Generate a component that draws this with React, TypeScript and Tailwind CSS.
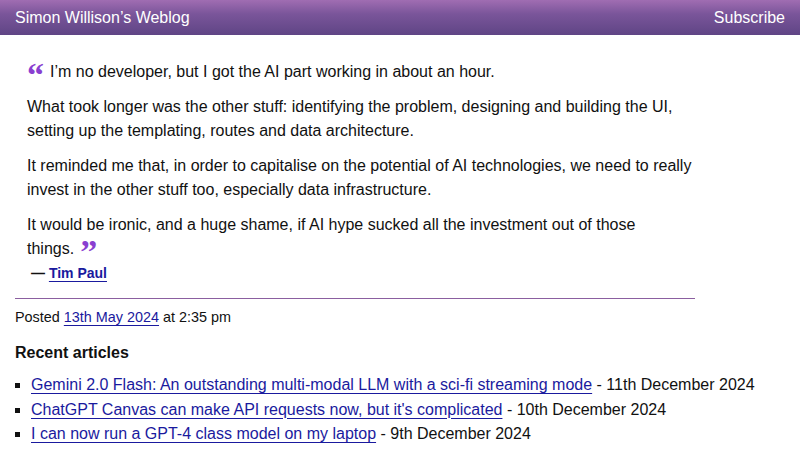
const recent = [
  {
    title: "Gemini 2.0 Flash: An outstanding multi-modal LLM with a sci-fi streaming mode",
    date: "11th December 2024",
  },
  {
    title: "ChatGPT Canvas can make API requests now, but it's complicated",
    date: "10th December 2024",
  },
  {
    title: "I can now run a GPT-4 class model on my laptop",
    date: "9th December 2024",
  },
];

const link = "text-[#1a1a9e] underline underline-offset-[3px] decoration-1";
const mark =
  "relative top-[9px] font-['Liberation_Serif',serif] text-[34px] font-bold leading-[0] text-[#8a3fd0]";

export default function App() {
  return (
    <div className="min-h-[450px] bg-white font-['Liberation_Sans',Arial,sans-serif] text-[#111]">
      <header className="flex h-[35px] items-center justify-between bg-[linear-gradient(180deg,#a06db2_0%,#7a559a_40%,#5f4585_100%)] px-[15px] text-[16px] text-white">
        <span>Simon Willison’s Weblog</span>
        <span>Subscribe</span>
      </header>

      <main className="px-[15px] pt-[25px]">
        <blockquote className="ml-[12px] w-[670px] text-[16px] leading-6">
          <p className="mb-[11px]">
            <span className={`${mark} mr-[6px]`}>“</span>
            I’m no developer, but I got the AI part working in about an hour.
          </p>
          <p className="mb-[11px]">
            What took longer was the other stuff: identifying the problem, designing and building the UI,
            setting up the templating, routes and data architecture.
          </p>
          <p className="mb-[11px]">
            It reminded me that, in order to capitalise on the potential of AI technologies, we need to really
            invest in the other stuff too, especially data infrastructure.
          </p>
          <p>
            It would be ironic, and a huge shame, if AI hype sucked all the investment out of those
            things.
            <span className={`${mark} ml-[6px]`}>”</span>
          </p>
          <p className="ml-[4px] text-[14px] font-bold leading-6">
            — <a className={link}>Tim Paul</a>
          </p>
        </blockquote>

        <hr className="mt-[13px] w-[680px] border-0 border-t border-[#8b5fa0]" />

        <p className="mt-[6px] text-[14.4px] leading-6">
          Posted <a className={`${link} font-normal`}>13th May 2024</a> at 2:35 pm
        </p>

        <h2 className="mt-[12px] text-[16px] font-bold leading-6">Recent articles</h2>

        <ul className="mt-[8px] list-[square] pl-4 text-[16px] leading-[24.5px]">
          {recent.map((item) => (
            <li key={item.title}>
              <a className={link}>{item.title}</a> - {item.date}
            </li>
          ))}
        </ul>
      </main>
    </div>
  );
}
